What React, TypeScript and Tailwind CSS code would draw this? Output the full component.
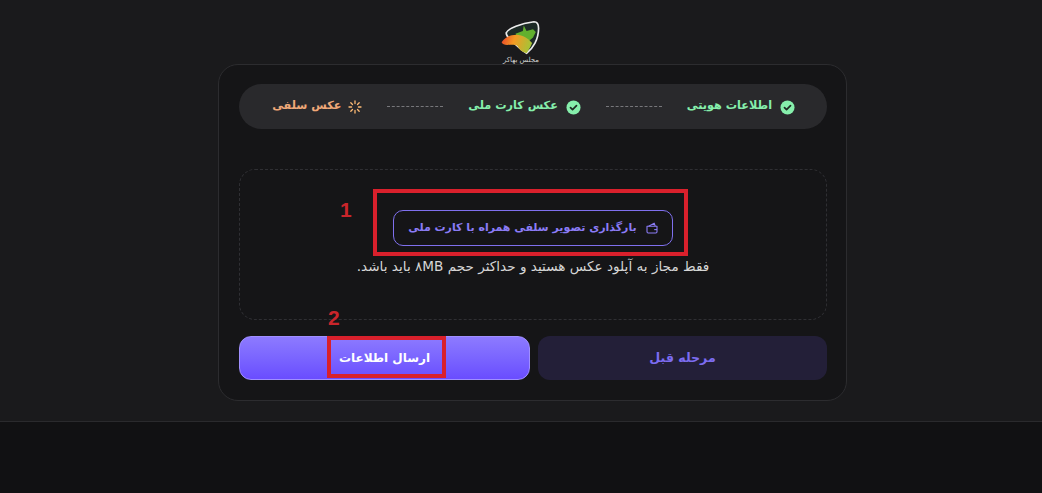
const font = { fontFamily: '"DejaVu Sans", "Liberation Sans", sans-serif' };

function CheckBadge() {
  return (
    <svg width="15" height="15" viewBox="0 0 16 16" className="mt-[2px] shrink-0">
      <circle cx="8" cy="8" r="7.5" fill="#86efac" />
      <path d="M4.8 8.2l2.2 2.1 4.2-4.2" fill="none" stroke="#1f2a24" strokeWidth="1.8" strokeLinecap="round" strokeLinejoin="round" />
    </svg>
  );
}

function Spinner() {
  return (
    <svg width="14" height="14" viewBox="0 0 14 14" className="shrink-0" stroke="#fdba74" strokeWidth="1.3" strokeLinecap="round">
      <path d="M7 1v2.6M7 10.4V13M1 7h2.6M10.4 7H13M2.8 2.8l1.7 1.7M9.5 9.5l1.7 1.7M2.8 11.2l1.7-1.7M9.5 4.5l1.7-1.7" />
    </svg>
  );
}

function FolderIcon() {
  return (
    <svg width="12" height="12" viewBox="0 0 12 12" fill="none" stroke="#8b7cf6" strokeWidth="1.1" strokeLinejoin="round" className="shrink-0">
      <path d="M1 4.2h10v5.6a1.2 1.2 0 0 1-1.2 1.2H2.2A1.2 1.2 0 0 1 1 9.8z" />
      <path d="M2.6 4.2l5.6-3 1 3" />
      <path d="M8.2 7.6h2.8" />
    </svg>
  );
}

function Logo() {
  return (
    <svg width="44" height="40" viewBox="0 0 44 40">
      <defs>
        <linearGradient id="bird" x1="0" y1="0" x2="1" y2="0.2">
          <stop offset="0" stopColor="#e8402a" />
          <stop offset="0.45" stopColor="#f59a23" />
          <stop offset="1" stopColor="#a8c236" />
        </linearGradient>
      </defs>
      <path d="M6 15C8 10 22 5 36 3c4 0 5 3 5 7 0 12-6 22-13 27-6-3-12-10-17-14-3-3-5-5-5-8z" fill="#1d2a26" stroke="#ececec" strokeWidth="1.8" />
      <path d="M25 7l3 6 7-2 3 3-3 6-6 5-9-3-4-6 8-3z" fill="#62b02e" />
      <path d="M1 25c4-5 9-8 16-8 7 0 13 4 17 9-2 5-4 8-6 11-5-1-8-4-10-8-3-2-8-1-11-1-3 0-5-1-6-3z" fill="url(#bird)" />
    </svg>
  );
}

function Dashes() {
  return <div className="h-0 w-[56px] border-t border-dashed border-[#77777b]" />;
}

export default function App() {
  return (
    <div style={font} className="relative flex h-[493px] w-[1042px] flex-col overflow-hidden bg-[#111113]">
      <div className="flex h-[422px] flex-col border-b border-[#2a2a2d] bg-[#1a1a1c]">
        <div className="relative z-10 flex h-[64px] flex-col items-center pt-[19px]">
          <Logo />
          <span dir="rtl" className="mt-[1px] text-[7px] leading-[7px] text-[#cfcfcf]">مجلس بهاکر</span>
        </div>

        <div dir="rtl" className="ml-[218px] h-[337px] w-[629px] rounded-[20px] border border-[#2c2c2f] bg-[#151517] pt-[19px] pr-[19px] pl-[20px]">
          <div className="flex h-[45px] items-center gap-[25px] rounded-full bg-[#29292c] pr-[32px]">
            <div className="flex items-center gap-[8px]">
              <CheckBadge />
              <span className="text-[11.25px] font-bold text-[#86efac]">اطلاعات هویتی</span>
            </div>
            <Dashes />
            <div className="flex items-center gap-[8px]">
              <CheckBadge />
              <span className="text-[11.25px] font-bold text-[#86efac]">عکس کارت ملی</span>
            </div>
            <Dashes />
            <div className="flex items-center gap-[7px]">
              <Spinner />
              <span className="text-[11.25px] font-bold text-[#f0a878]">عکس سلفی</span>
            </div>
          </div>

          <div className="mt-[40px] flex h-[151px] flex-col items-center rounded-2xl border border-dashed border-[#2f2f33] pt-[40px]">
            <div className="flex h-[36px] w-[280px] items-center justify-center gap-[9px] rounded-[10px] border border-[#7f70ee]">
              <FolderIcon />
              <span className="text-[11px] font-bold text-[#8b7cf6]">بارگذاری تصویر سلفی همراه با کارت ملی</span>
            </div>
            <p className="mt-[12px] text-[13.6px] leading-[16px] text-[#d6d6d6]">فقط مجاز به آپلود عکس هستید و حداکثر حجم ۸MB باید باشد.</p>
          </div>

          <div className="mt-[16px] flex gap-[8px]">
            <div className="flex h-[44px] flex-1 items-center justify-center rounded-xl bg-[#231f38] text-[12.6px] font-bold text-[#7c6cf0]">مرحله قبل</div>
            <div className="flex h-[44px] flex-1 items-center justify-center rounded-xl border border-[#a08fff] bg-gradient-to-b from-[#8d7aff] to-[#6a4cff] text-[12px] font-bold text-white">ارسال اطلاعات</div>
          </div>
        </div>
      </div>

      <div className="absolute left-[373px] top-[189px] h-[67px] w-[315px] border-4 border-[#d9202c]" />
      <div className="absolute left-[327px] top-[336px] h-[42px] w-[119px] border-4 border-[#d9202c]" />
      <span className="absolute left-[340px] top-[198px] font-['Liberation_Sans'] text-[21px] leading-[24px] font-bold text-[#c9252b]">1</span>
      <span className="absolute left-[328px] top-[306px] font-['Liberation_Sans'] text-[21px] leading-[24px] font-bold text-[#c9252b]">2</span>
    </div>
  );
}
